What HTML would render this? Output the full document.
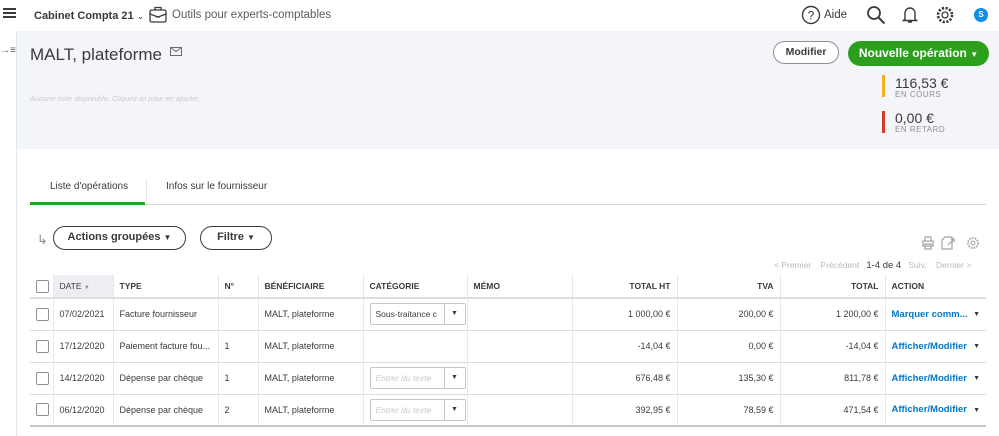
<!DOCTYPE html>
<html><head><meta charset="utf-8"><style>
*{margin:0;padding:0;box-sizing:border-box}
body{width:999px;height:436px;overflow:hidden;background:#fff;font-family:"Liberation Sans",sans-serif;color:#393a3d;position:relative}
.a{position:absolute;white-space:nowrap}
.hdr{left:16px;top:31px;width:983px;height:118px;background:#f4f5f8}
.vl{left:16px;top:31px;width:1px;height:405px;background:#dde6ef}
.pill{border:1.5px solid #393a3d;border-radius:14px;font-weight:bold;font-size:11px;text-align:center}
table{position:absolute;left:30px;top:275px;border-collapse:collapse;font-size:9px;table-layout:fixed;width:956px}
td,th{border-right:1px solid #e8e9ec;padding:0 6px;height:32px;white-space:nowrap;overflow:hidden;position:relative}
th{height:23px;font-size:8.5px;text-align:left;font-weight:bold;border-bottom:2px solid #dcdde0}
td{border-bottom:1px solid #dcdde0}
tr:last-child td{border-bottom:2px solid #c7c8cb}
th:last-child,td:last-child{border-right:none}
.r{text-align:right}
.cb{display:inline-block;width:13px;height:13px;border:1px solid #8d9096;border-radius:2px;vertical-align:middle}
.sel{display:inline-block;width:96px;height:22px;border:1px solid #c4c5c8;border-radius:2px;position:relative;vertical-align:middle;font-size:8.5px;line-height:20px;padding-left:5px;overflow:hidden}
.sel i{position:absolute;right:0;top:0;width:21px;height:20px;border-left:1px solid #c4c5c8;font-style:normal;text-align:center;font-size:7px;color:#393a3d;background:#fff}
.lk{color:#0077c5;font-weight:bold;font-size:9.5px}
.dd{position:absolute;right:6px;top:12px;font-size:7px}
</style></head><body>
<div class="a" style="left:3px;top:8px;width:13px;height:2px;background:#393a3d;box-shadow:0 4px 0 #393a3d,0 8px 0 #393a3d"></div>
<div class="a" style="left:34px;top:10px;font-size:11px;font-weight:bold">Cabinet Compta 21 <span style="font-weight:normal;font-size:9px">&#8964;</span></div>
<svg class="a" style="left:149px;top:6px" width="18" height="17" viewBox="0 0 18 17"><rect x="1" y="4" width="16" height="12" rx="1.5" fill="none" stroke="#393a3d" stroke-width="1.3"/><path d="M6 4V1.5h6V4M1 8l8 3 8-3M7 11h4" fill="none" stroke="#393a3d" stroke-width="1.3"/></svg>
<div class="a" style="left:172px;top:9px;font-size:11.5px;color:#5b5c60">Outils pour experts-comptables</div>
<svg class="a" style="left:801px;top:5px" width="20" height="20"><circle cx="10" cy="10" r="8.5" fill="none" stroke="#393a3d" stroke-width="1.4"/><text x="10" y="14.5" font-size="12" text-anchor="middle" fill="#393a3d" font-family="Liberation Sans">?</text></svg>
<div class="a" style="left:824px;top:9px;font-size:11.5px">Aide</div>
<svg class="a" style="left:866px;top:5px" width="20" height="20"><circle cx="8" cy="8" r="6" fill="none" stroke="#393a3d" stroke-width="1.8"/><path d="M12.5 12.5l6 6" stroke="#393a3d" stroke-width="2"/></svg>
<svg class="a" style="left:902px;top:5px" width="16" height="20"><path d="M3 14V8a5 5 0 0110 0v6l1.5 1.5h-13zM6 17h4" fill="none" stroke="#393a3d" stroke-width="1.4"/></svg>
<svg class="a" style="left:935px;top:5px" width="20" height="20"><circle cx="10" cy="10" r="3" fill="none" stroke="#393a3d" stroke-width="1.3"/><circle cx="10" cy="10" r="7" fill="none" stroke="#393a3d" stroke-width="2.6" stroke-dasharray="2.2 1.5"/></svg>
<div class="a" style="left:974px;top:8px;width:14px;height:14px;border-radius:50%;background:#0d8ee9;color:#fff;font-size:8px;font-weight:bold;text-align:center;line-height:14px">S</div>
<div class="a hdr"></div>
<div class="a vl"></div>
<div class="a" style="left:0;top:45px;font-size:10px;color:#5b5c60">&#8594;&#8801;</div>
<div class="a" style="left:30px;top:45px;font-size:17px;color:#393a3d">MALT, plateforme</div>
<svg class="a" style="left:170px;top:47px" width="12" height="9"><rect x="0.5" y="0.5" width="11" height="8" fill="none" stroke="#6b6c72"/><path d="M0.5 0.5l5.5 4 5.5-4" fill="none" stroke="#6b6c72"/></svg>
<div class="a" style="left:30px;top:94px;font-size:7.5px;font-style:italic;color:#c7cad1">Aucune note disponible. Cliquez ici pour en ajouter.</div>
<div class="a pill" style="left:773px;top:41px;width:66px;height:23px;border-color:#8d9096;border-width:1px;font-size:10.5px;line-height:21px;background:#fff">Modifier</div>
<div class="a" style="left:848px;top:41px;width:141px;height:25px;background:#2ca01c;border-radius:13px;color:#fff;font-weight:bold;font-size:12px;text-align:center;line-height:25px">Nouvelle opération <span style="font-size:8px">&#9660;</span></div>
<div class="a" style="left:882px;top:75px;width:3px;height:22px;background:#f2b122"></div>
<div class="a" style="left:895px;top:75px;font-size:14px">116,53 €</div>
<div class="a" style="left:895px;top:90px;font-size:8px;color:#8d9096;letter-spacing:.5px">EN COURS</div>
<div class="a" style="left:882px;top:111px;width:3px;height:22px;background:#d23c2c"></div>
<div class="a" style="left:895px;top:110px;font-size:14px">0,00 €</div>
<div class="a" style="left:895px;top:125px;font-size:8px;color:#8d9096;letter-spacing:.5px">EN RETARD</div>
<div class="a" style="left:50px;top:181px;font-size:10px">Liste d'opérations</div>
<div class="a" style="left:166px;top:181px;font-size:10px">Infos sur le fournisseur</div>
<div class="a" style="left:146px;top:180px;width:1px;height:24px;background:#e3e4e7"></div>
<div class="a" style="left:30px;top:204px;width:956px;height:1px;background:#d4d5d8"></div>
<div class="a" style="left:30px;top:202px;width:115px;height:3px;background:#2ca01c"></div>
<div class="a" style="left:37px;top:232px;font-size:13px;color:#8d9096">&#8627;</div>
<div class="a pill" style="left:53px;top:226px;width:133px;height:24px;line-height:21px">Actions groupées <span style="font-size:8px">&#9660;</span></div>
<div class="a pill" style="left:200px;top:226px;width:72px;height:24px;line-height:21px">Filtre <span style="font-size:8px">&#9660;</span></div>
<svg class="a" style="left:921px;top:236px" width="60" height="14"><path d="M2 5h10v5H2zM4 5V1h6v4M4 8h6v5H4z" fill="none" stroke="#a0a2a7" stroke-width="1.2"/><path d="M24 1h7v12H21V4zM27 9l6-6M30 3h3v3" fill="none" stroke="#a0a2a7" stroke-width="1.2"/><circle cx="52" cy="7" r="2" fill="none" stroke="#a0a2a7"/><circle cx="52" cy="7" r="5" fill="none" stroke="#a0a2a7" stroke-width="1.8" stroke-dasharray="1.6 1.2"/></svg>
<div class="a" style="left:774px;top:260px;font-size:8.5px;color:#b7b9bf">&lt; Premier&nbsp;&nbsp;&nbsp; Précédent&nbsp;&nbsp; <span style="color:#393a3d;font-size:9.5px">1-4 de 4</span>&nbsp;&nbsp; Suiv.&nbsp;&nbsp;&nbsp; Dernier &gt;</div>
<table>
<colgroup><col style="width:23px"><col style="width:60px"><col style="width:105px"><col style="width:40px"><col style="width:105px"><col style="width:104px"><col style="width:105px"><col style="width:105px"><col style="width:103px"><col style="width:105px"><col style="width:101px"></colgroup>
<tr><th><span class="cb"></span></th><th style="background:#eceef1;font-weight:normal">DATE <span style="font-size:6px;color:#8d9096">&#9660;</span></th><th>TYPE</th><th>N°</th><th>BÉNÉFICIAIRE</th><th>CATÉGORIE</th><th>MÉMO</th><th class="r">TOTAL HT</th><th class="r">TVA</th><th class="r">TOTAL</th><th>ACTION</th></tr>
<tr><td><span class="cb"></span></td><td>07/02/2021</td><td>Facture fournisseur</td><td></td><td>MALT, plateforme</td><td><span class="sel">Sous-traitance c<i>&#9660;</i></span></td><td></td><td class="r">1 000,00 €</td><td class="r">200,00 €</td><td class="r">1 200,00 €</td><td><span class="lk">Marquer comm...</span><span class="dd">&#9660;</span></td></tr>
<tr><td><span class="cb"></span></td><td>17/12/2020</td><td>Paiement facture fou...</td><td>1</td><td>MALT, plateforme</td><td></td><td></td><td class="r">-14,04 €</td><td class="r">0,00 €</td><td class="r">-14,04 €</td><td><span class="lk">Afficher/Modifier</span><span class="dd">&#9660;</span></td></tr>
<tr><td><span class="cb"></span></td><td>14/12/2020</td><td>Dépense par chèque</td><td>1</td><td>MALT, plateforme</td><td><span class="sel" style="color:#c7cad1;font-style:italic">Entrer du texte<i>&#9660;</i></span></td><td></td><td class="r">676,48 €</td><td class="r">135,30 €</td><td class="r">811,78 €</td><td><span class="lk">Afficher/Modifier</span><span class="dd">&#9660;</span></td></tr>
<tr><td><span class="cb"></span></td><td>06/12/2020</td><td>Dépense par chèque</td><td>2</td><td>MALT, plateforme</td><td><span class="sel" style="color:#c7cad1;font-style:italic">Entrer du texte<i>&#9660;</i></span></td><td></td><td class="r">392,95 €</td><td class="r">78,59 €</td><td class="r">471,54 €</td><td><span class="lk">Afficher/Modifier</span><span class="dd">&#9660;</span></td></tr>
</table>
</body></html>
